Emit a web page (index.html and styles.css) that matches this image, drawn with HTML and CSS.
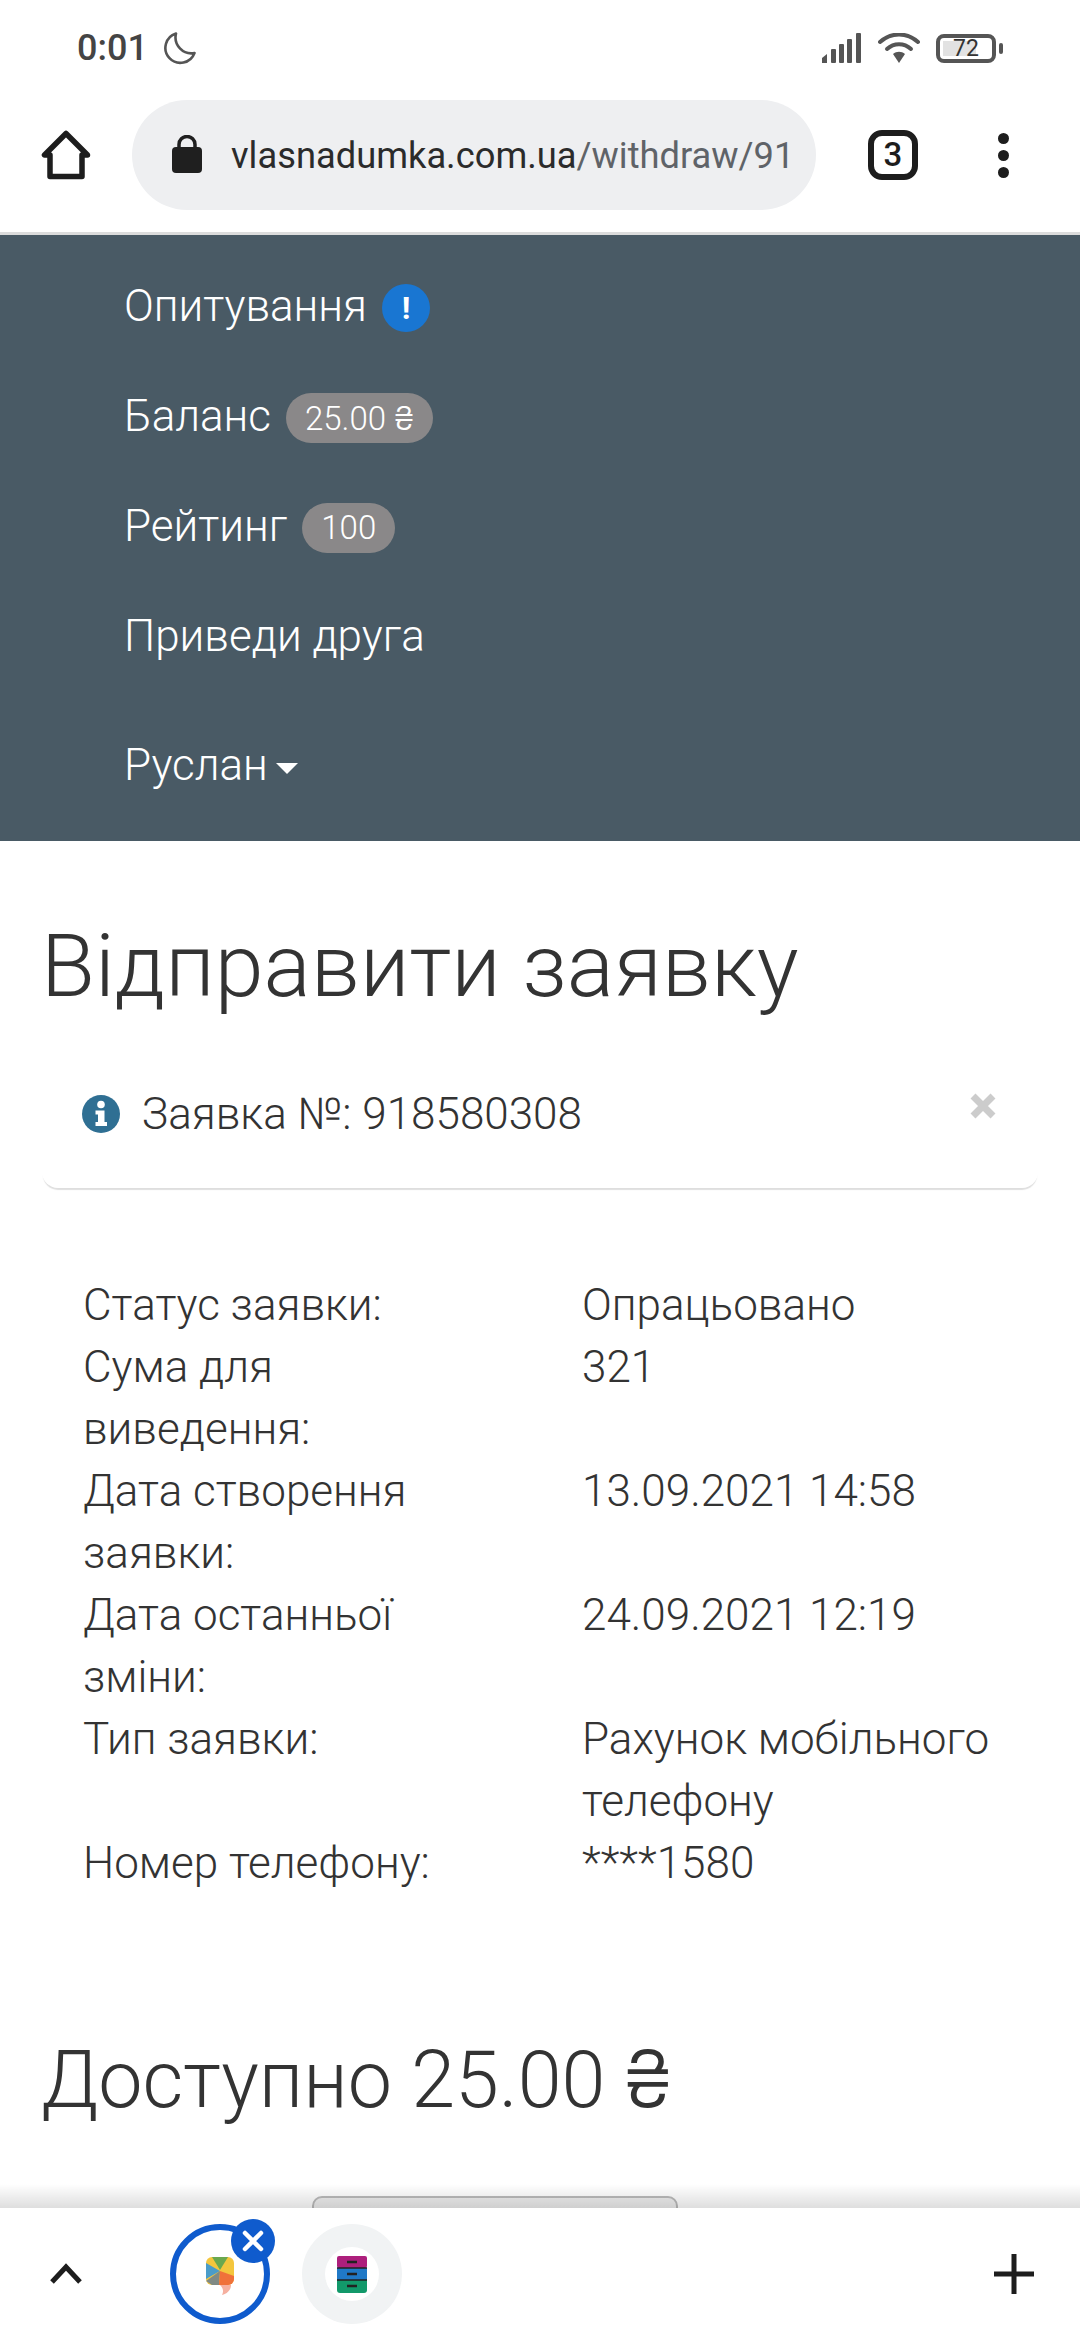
FILE: index.html
```html
<!DOCTYPE html>
<html lang="uk">
<head>
    <meta charset="UTF-8">
    <meta name="viewport" content="width=device-width, initial-scale=1.0">
    <title>Відправити заявку</title>
    <link rel="stylesheet" href="styles.css">
</head>
<body>
<div class="screen">

    <!-- Status bar -->
    <div class="status">
        <span class="clock">0:01</span>
        <svg class="moon" viewBox="0 0 34 34"><path d="M13 2.5 A15 15 0 1 0 31.5 22 A16 16 0 0 1 13 2.5 Z" fill="none" stroke="#555" stroke-width="2.6" stroke-linejoin="round"/></svg>
        <span class="status-fill"></span>
        <svg class="signal" viewBox="0 0 40 30"><g fill="#555"><path d="M0 30 V25 L5 21 V30 Z"/><rect x="9" y="16" width="5" height="14" rx="1"/><rect x="17" y="11" width="5" height="19" rx="1"/><rect x="25" y="6" width="5" height="24" rx="1"/><rect x="34" y="0" width="5" height="30" rx="1"/></g></svg>
        <svg class="wifi" viewBox="0 0 42 30"><g fill="none" stroke="#555" stroke-width="4" stroke-linecap="round"><path d="M2 9 C13 -1 29 -1 40 9"/><path d="M9 16 C16 9.500 26 9.500 33 16"/></g><path d="M15 21 C18.500 18 23.500 18 27 21 L21 30 Z" fill="#555"/></svg>
        <div class="battery">
            <div class="battery-body"><div class="battery-level"></div><span class="battery-text">72</span></div>
            <div class="battery-tip"></div>
        </div>
    </div>

    <!-- Browser toolbar -->
    <div class="toolbar">
        <svg class="home" viewBox="0 0 50 50"><path d="M25 3.500 L3.500 25 H9 V46.500 H41 V25 H46.500 Z" fill="none" stroke="#1d1d1d" stroke-width="5.500" stroke-linejoin="round"/></svg>
        <div class="url-pill">
            <svg class="lock" viewBox="0 0 30 40"><path d="M7 14 V9.500 A8 8 0 0 1 23 9.500 V14" fill="none" stroke="#1f1f1f" stroke-width="3.500"/><rect x="0" y="12" width="30" height="26" rx="4" fill="#1f1f1f"/></svg>
            <span class="url"><span class="url-host">vlasnadumka.com.ua</span>/withdraw/91</span>
        </div>
        <div class="tab-count">3</div>
        <div class="dots"><i></i><i></i><i></i></div>
    </div>

    <!-- Site navigation -->
    <nav class="site-nav">
        <a class="nav-item">Опитування <span class="alert-dot">!</span></a>
        <a class="nav-item">Баланс <span class="pill">25.00 <span class="uah">₴</span></span></a>
        <a class="nav-item">Рейтинг <span class="pill">100</span></a>
        <a class="nav-item">Приведи друга</a>
        <a class="nav-item nav-user">Руслан<span class="caret"></span></a>
    </nav>

    <main class="content">
        <h1 class="page-title">Відправити заявку</h1>

        <div class="notice">
            <svg class="info" viewBox="0 0 38 38"><circle cx="19" cy="19" r="19" fill="#2f6f93"/><circle cx="19" cy="9.500" r="3.800" fill="#fff"/><path d="M13.500 15.500 H22.500 V27 H25 V31 H13.500 V27 H16 V19.500 H13.500 Z" fill="#fff"/></svg>
            <span>Заявка №: 918580308</span>
            <svg class="close" viewBox="0 0 28 28"><path d="M4 4 L24 24 M24 4 L4 24" stroke="#ccc" stroke-width="7"/></svg>
        </div>

        <div class="details">
            <div class="label">Статус заявки:</div><div>Опрацьовано</div>
            <div class="label">Сума для виведення:</div><div>321</div>
            <div class="label">Дата створення заявки:</div><div>13.09.2021 14:58</div>
            <div class="label">Дата останньої зміни:</div><div>24.09.2021 12:19</div>
            <div class="label">Тип заявки:</div><div>Рахунок мобільного телефону</div>
            <div class="label">Номер телефону:</div><div>****1580</div>
        </div>

        <h2 class="available">Доступно 25.00 <span class="uah">₴</span></h2>
        <div class="peek-button"></div>
    </main>

    <!-- Tab strip -->
    <div class="tabstrip">
        <svg class="chevron" viewBox="0 0 34 22"><path d="M3 19 L17 4 L31 19" fill="none" stroke="#1d1d1d" stroke-width="5"/></svg>
        <div class="tab tab-active">
            <svg class="favicon" viewBox="0 0 28 38">
                <rect x="0" y="0" width="28" height="28" rx="6" fill="#f4c63d"/>
                <path d="M6 0 H22 L14 13 Z" fill="#6aa84f"/>
                <path d="M0 6 L14 14 L0 22 Z" fill="#4a9cc9"/>
                <path d="M0 24 L14 14 L13 28 H6 Z" fill="#808a84"/>
                <path d="M14 14 L28 19 V22 A6 6 0 0 1 22 28 H13 Z" fill="#f0713a"/>
                <path d="M14 28 H25 C25 33 21 37 16 38 C18 34 17 31 14 28 Z" fill="#f6b0a0"/>
            </svg>
            <div class="tab-close">
                <svg viewBox="0 0 24 24"><path d="M4 4 L20 20 M20 4 L4 20" stroke="#fff" stroke-width="4.500" stroke-linecap="round"/></svg>
            </div>
        </div>
        <div class="tab tab-other">
            <div class="tab-inner">
                <svg class="favicon" viewBox="0 0 30 37">
                    <rect x="0" y="0" width="30" height="12" rx="2" fill="#ad1f7c"/>
                    <rect x="0" y="12" width="30" height="12" fill="#2079c7"/>
                    <path d="M0 24 H30 V34 A3 3 0 0 1 27 37 H3 A3 3 0 0 1 0 34 Z" fill="#12996a"/>
                    <g stroke="#222" stroke-width="1.500"><path d="M0 12 H30 M0 24 H30"/><path d="M10 6 H20 M10 18 H20 M10 30 H20" stroke-width="2.500"/></g>
                </svg>
            </div>
        </div>
        <span class="status-fill"></span>
        <svg class="plus" viewBox="0 0 40 40"><path d="M20 0 V40 M0 20 H40" stroke="#1d1d1d" stroke-width="5"/></svg>
    </div>

</div>
</body>
</html>
```

FILE: styles.css
```css
html, body {
    margin: 0;
    padding: 0;
}
body {
    font-family: Roboto, "Noto Sans", sans-serif;
    font-weight: 300;
    color: #333;
    background: #fff;
}
.screen {
    position: relative;
    width: 1080px;
    height: 2340px;
    overflow: hidden;
}
.uah {
    font-family: Inter, Roboto, sans-serif;
}

/* Status bar */
.status {
    display: flex;
    align-items: center;
    height: 96px;
    padding: 0 77px 4px 77px;
}
.clock {
    font-size: 36px;
    font-weight: 500;
    color: #444;
}
.moon {
    width: 34px;
    height: 34px;
    margin-left: 15px;
}
.status-fill {
    flex: 1;
}
.signal {
    width: 40px;
    height: 30px;
}
.wifi {
    width: 42px;
    height: 30px;
    margin-left: 16px;
}
.battery {
    display: flex;
    align-items: center;
    margin-left: 16px;
}
.battery-body {
    position: relative;
    box-sizing: border-box;
    width: 60px;
    height: 29px;
    border: 4px solid #555;
    border-radius: 8px;
    padding: 3px;
}
.battery-level {
    width: 72%;
    height: 100%;
    background: #e2e2e2;
}
.battery-text {
    position: absolute;
    left: 0;
    right: 0;
    top: -3px;
    text-align: center;
    font-size: 23px;
    line-height: 27px;
    font-weight: 400;
    color: #333;
}
.battery-tip {
    width: 4px;
    height: 11px;
    margin-left: 3px;
    background: #555;
    border-radius: 2px;
}

/* Toolbar */
.toolbar {
    display: flex;
    align-items: center;
    box-sizing: border-box;
    height: 135px;
    padding-bottom: 22px;
    border-bottom: 3px solid #dcdcdc;
}
.home {
    width: 50px;
    height: 50px;
    margin-left: 41px;
}
.url-pill {
    display: flex;
    align-items: center;
    box-sizing: border-box;
    width: 684px;
    height: 110px;
    margin-left: 41px;
    padding: 0 23px 0 40px;
    background: #eeeff1;
    border-radius: 55px;
}
.lock {
    flex: none;
    width: 30px;
    height: 40px;
}
.url {
    margin-left: 29px;
    white-space: nowrap;
    font-size: 36.3px;
    font-weight: 400;
    color: #5f6368;
}
.url-host {
    color: #2b2b2b;
}
.tab-count {
    box-sizing: border-box;
    width: 50px;
    height: 50px;
    margin-left: 52px;
    border: 6px solid #1d1d1d;
    border-radius: 14px;
    text-align: center;
    font-size: 33px;
    line-height: 38px;
    font-weight: 500;
    color: #1d1d1d;
}
.dots {
    display: flex;
    flex-direction: column;
    gap: 6px;
    margin-left: 80px;
}
.dots i {
    display: block;
    width: 11px;
    height: 11px;
    background: #1d1d1d;
    border-radius: 50%;
}

/* Site nav */
.site-nav {
    display: flex;
    flex-direction: column;
    box-sizing: border-box;
    height: 606px;
    padding: 16px 0 0 124px;
    background: #495a65;
    color: #fff;
}
.nav-item {
    display: flex;
    align-items: center;
    gap: 15px;
    height: 110px;
    font-size: 44px;
}
.nav-user {
    gap: 8px;
    margin-top: 19px;
}
.alert-dot {
    width: 48px;
    height: 48px;
    margin-top: 4px;
    border-radius: 50%;
    background: #1976d2;
    text-align: center;
    font-size: 32px;
    line-height: 48px;
    font-weight: 700;
}
.pill {
    height: 50px;
    margin-top: 4px;
    padding: 0 19px;
    border-radius: 25px;
    background: #8a8889;
    font-size: 33px;
    line-height: 50px;
}
.caret {
    width: 0;
    height: 0;
    margin-top: 6px;
    border-left: 11px solid transparent;
    border-right: 11px solid transparent;
    border-top: 11px solid #fff;
}

/* Main content */
.content {
    padding: 0 42px;
}
.page-title,
.available {
    margin: 0 0 0 -1px;
    font-weight: 300;
    line-height: 100px;
}
.page-title {
    margin-top: 75px;
    font-size: 88px;
}
.notice {
    display: flex;
    align-items: center;
    position: relative;
    box-sizing: border-box;
    height: 138px;
    margin-top: 34px;
    padding: 0 40px 10px 40px;
    border-radius: 0 0 16px 16px;
    box-shadow: 0 3px 1px -1px rgba(0, 0, 0, 0.13);
    font-size: 44px;
}
.info {
    width: 38px;
    height: 38px;
    margin-right: 22px;
}
.close {
    position: absolute;
    right: 41px;
    top: 42px;
    width: 28px;
    height: 28px;
}
.details {
    display: grid;
    grid-template-columns: 499px 1fr;
    margin: 86px 42px 0 41px;
    font-size: 44px;
    line-height: 62px;
}
.label {
    max-width: 400px;
}
.available {
    margin-top: 134px;
    font-size: 79px;
}
.peek-button {
    box-sizing: border-box;
    width: 366px;
    height: 80px;
    margin: 66px 0 0 270px;
    border: 2px solid #bbb;
    border-radius: 10px;
    background: #eee;
}

/* Tab strip */
.tabstrip {
    position: absolute;
    left: 0;
    right: 0;
    bottom: 0;
    display: flex;
    align-items: center;
    height: 132px;
    background: #fff;
}
.tabstrip::before {
    content: "";
    position: absolute;
    left: 0;
    right: 0;
    top: -24px;
    height: 24px;
    background: linear-gradient(rgba(0, 0, 0, 0), rgba(0, 0, 0, 0.13));
}
.chevron {
    width: 34px;
    height: 22px;
    margin-left: 49px;
}
.tab {
    position: relative;
    display: flex;
    align-items: center;
    justify-content: center;
    box-sizing: border-box;
    width: 100px;
    height: 100px;
    border-radius: 50%;
}
.tab-active {
    margin-left: 87px;
    border: 6px solid #0f5bcd;
}
.tab-other {
    margin-left: 32px;
    background: #f1f3f4;
}
.tab-inner {
    display: flex;
    align-items: center;
    justify-content: center;
    width: 54px;
    height: 54px;
    border-radius: 50%;
    background: #fff;
}
.tab-active .favicon {
    width: 28px;
    height: 38px;
    margin-top: 4px;
}
.tab-other .favicon {
    width: 30px;
    height: 37px;
}
.tab-close {
    position: absolute;
    right: -11px;
    top: -11px;
    display: flex;
    align-items: center;
    justify-content: center;
    width: 44px;
    height: 44px;
    border-radius: 50%;
    background: #0f5bcd;
}
.tab-close svg {
    width: 24px;
    height: 24px;
}
.plus {
    width: 40px;
    height: 40px;
    margin-right: 46px;
}
```
